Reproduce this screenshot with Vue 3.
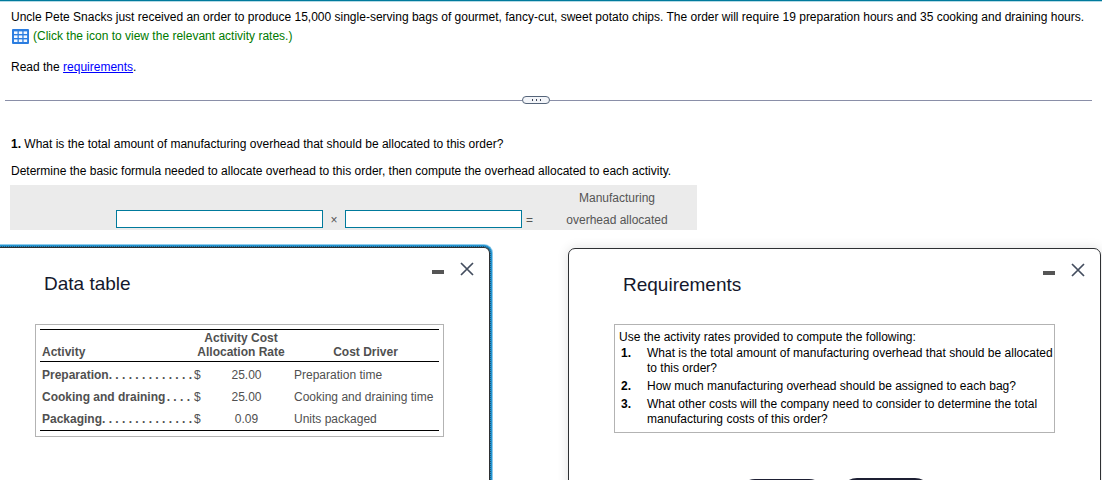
<script setup>
import { ref } from 'vue'

const factorA = ref('')
const factorB = ref('')

const rates = [
  { name: 'Preparation', dots: 13, rate: '25.00', driver: 'Preparation time' },
  { name: 'Cooking and draining', dots: 4, rate: '25.00', driver: 'Cooking and draining time' },
  { name: 'Packaging', dots: 14, rate: '0.09', driver: 'Units packaged' },
]

const leader = (n) => Array(n).fill('.').join(' ')

const requirements = [
  'What is the total amount of manufacturing overhead that should be allocated\nto this order?',
  'How much manufacturing overhead should be assigned to each bag?',
  'What other costs will the company need to consider to determine the total\nmanufacturing costs of this order?',
]
</script>

<template>
  <div class="page">
    <section class="intro">
      <p>Uncle Pete Snacks just received an order to produce 15,000 single-serving bags of gourmet, fancy-cut, sweet potato chips. The order will require 19 preparation hours and 35 cooking and draining hours.</p>
      <p class="rates-line">
        <button class="rates-button" type="button" aria-label="View the relevant activity rates">
          <svg width="17" height="15" viewBox="0 0 17 15" aria-hidden="true">
            <rect width="17" height="15" rx="1" fill="#2b7de0" />
            <g fill="#f4f8ff">
              <rect x="2" y="2.4" width="3.5" height="2.6" /><rect x="6.8" y="2.4" width="3.5" height="2.6" /><rect x="11.6" y="2.4" width="3.5" height="2.6" />
              <rect x="2" y="6.4" width="3.5" height="2.6" /><rect x="6.8" y="6.4" width="3.5" height="2.6" /><rect x="11.6" y="6.4" width="3.5" height="2.6" />
              <rect x="2" y="10.4" width="3.5" height="2.6" /><rect x="6.8" y="10.4" width="3.5" height="2.6" /><rect x="11.6" y="10.4" width="3.5" height="2.6" />
            </g>
          </svg>
        </button>
        <span>(Click the icon to view the relevant activity rates.)</span>
      </p>
      <p class="read">Read the <a href="#requirements">requirements</a>.</p>
    </section>

    <div class="divider">
      <button class="expander" type="button" aria-label="Show more">
        <i></i><i></i><i></i>
      </button>
    </div>

    <section class="question">
      <p><b>1.</b> What is the total amount of manufacturing overhead that should be allocated to this order?</p>
      <p>Determine the basic formula needed to allocate overhead to this order, then compute the overhead allocated to each activity.</p>
      <div class="formula">
        <span class="result-top">Manufacturing</span>
        <input v-model="factorA" class="factor-a" type="text" aria-label="First factor" />
        <span class="times">×</span>
        <input v-model="factorB" class="factor-b" type="text" aria-label="Second factor" />
        <span class="equals">=</span>
        <span class="result-bottom">overhead allocated</span>
      </div>
    </section>

    <div class="panels">
      <section class="panel data-panel">
        <header class="panel-head">
          <h2>Data table</h2>
          <div class="controls">
            <button type="button" class="minimize" aria-label="Minimize"></button>
            <button type="button" class="close" aria-label="Close">
              <svg width="14" height="14" viewBox="0 0 14 14" aria-hidden="true"><path d="M1 1 13 13M13 1 1 13" /></svg>
            </button>
          </div>
        </header>
        <div class="box table-box">
          <table>
            <colgroup>
              <col class="c-activity" /><col class="c-sign" /><col class="c-rate" /><col class="c-driver" />
            </colgroup>
            <thead>
              <tr>
                <th scope="col" class="left">Activity</th>
                <th scope="col" colspan="2">Activity Cost<br />Allocation Rate</th>
                <th scope="col">Cost Driver</th>
              </tr>
            </thead>
            <tbody>
              <tr v-for="row in rates" :key="row.name">
                <th scope="row" class="left">
                  <div class="led"><span>{{ row.name }}</span><span aria-hidden="true">{{ leader(row.dots) }}</span></div>
                </th>
                <td class="sign">$</td>
                <td class="rate">{{ row.rate }}</td>
                <td class="driver">{{ row.driver }}</td>
              </tr>
            </tbody>
          </table>
        </div>
      </section>

      <section id="requirements" class="panel req-panel">
        <header class="panel-head">
          <h2>Requirements</h2>
          <div class="controls">
            <button type="button" class="minimize" aria-label="Minimize"></button>
            <button type="button" class="close" aria-label="Close">
              <svg width="14" height="14" viewBox="0 0 14 14" aria-hidden="true"><path d="M1 1 13 13M13 1 1 13" /></svg>
            </button>
          </div>
        </header>
        <div class="box req-box">
          <p>Use the activity rates provided to compute the following:</p>
          <ol>
            <li v-for="(text, i) in requirements" :key="i"><b>{{ i + 1 }}.</b><span>{{ text }}</span></li>
          </ol>
        </div>
        <footer class="actions">
          <button type="button" class="pill" aria-label="Print"></button>
          <button type="button" class="pill filled" aria-label="Done"></button>
        </footer>
      </section>
    </div>
  </div>
</template>

<style>
body {
  margin: 0;
  background: #fff;
}
</style>

<style scoped>
.page {
  box-sizing: border-box;
  display: flex;
  flex-direction: column;
  height: 100vh;
  overflow: hidden;
  border-top: 1px solid #007a9c;
  box-shadow: inset 0 1px 0 #b5dbe6;
  background: #fff;
  color: #000;
  font-family: "Liberation Sans", Arial, sans-serif;
  font-size: 12px;
  line-height: 16px;
}

p,
h2,
ol {
  margin: 0;
  padding: 0;
}

button {
  padding: 0;
  border: 0;
  background: none;
  cursor: pointer;
}

svg {
  display: block;
}

.intro {
  padding: 8px 11px 0;
}

.rates-line {
  display: flex;
  align-items: center;
  gap: 4px;
  margin-top: 3px;
  padding-left: 1px;
  color: #007a00;
}

.read {
  margin-top: 15px;
}

.read a {
  color: #00f;
}

.divider {
  display: flex;
  align-items: center;
  margin: 21px 10px 0 5px;
}

.divider::before,
.divider::after {
  content: "";
  flex: 1 1 0;
  height: 1px;
  background: #8a8fa8;
}

.divider::before {
  flex-grow: 517;
}

.divider::after {
  flex-grow: 542;
}

.expander {
  box-sizing: border-box;
  display: flex;
  align-items: center;
  justify-content: center;
  gap: 3px;
  width: 28px;
  height: 8px;
  border: 1px solid #56657a;
  border-radius: 4px;
  background: #f3f5f9;
}

.expander i {
  width: 1px;
  height: 2px;
  background: #3c4356;
}

.question {
  padding: 32px 10px 0;
}

.question p {
  padding-left: 1px;
}

.question p + p {
  margin-top: 11px;
}

.formula {
  display: grid;
  grid-template-columns: 106px 207px 22px 177px 15px 160px;
  grid-template-rows: 22px 22px;
  align-items: center;
  justify-content: start;
  justify-items: center;
  width: fit-content;
  margin-top: 6px;
  padding-top: 1px;
  background: #ebebeb;
  color: #555;
  line-height: 18px;
}

.formula span {
  padding-top: 2px;
}

.result-top {
  grid-area: 1 / 6;
}

.factor-a {
  grid-area: 2 / 2;
}

.times {
  grid-area: 2 / 3;
}

.factor-b {
  grid-area: 2 / 4;
}

.equals {
  grid-area: 2 / 5;
}

.result-bottom {
  grid-area: 2 / 6;
}

.formula input {
  box-sizing: border-box;
  width: 100%;
  height: 18px;
  padding: 0 3px;
  border: 1px solid #007a9c;
  border-radius: 0;
  background: #fff;
  font: inherit;
  outline: none;
}

.panels {
  flex: 1 0 auto;
  display: grid;
  grid-template-columns: 490fr 533fr;
  gap: 78px;
  margin-top: 14px;
  padding-right: 1px;
}

.panel {
  box-sizing: border-box;
  min-width: 0;
  border: 1px solid #2e3033;
  background: #fff;
}

.data-panel {
  margin-top: 3px;
  padding: 0 45px 40px 35px;
  border-left: 0;
  border-radius: 0 6px 0 0;
  outline: 1px dotted #24566f;
  box-shadow: 0 0 0 2px #2293d1, 0 0 0 3px #8fcbea;
}

.req-panel {
  margin-top: 4px;
  padding: 0 45px 0;
  border-radius: 7px 7px 0 0;
  box-shadow: 0 0 12px rgba(0, 0, 0, 0.12);
}

.panel-head {
  display: flex;
  justify-content: space-between;
  height: 76px;
  padding-left: 9px;
}

.req-panel .panel-head {
  height: 75px;
}

.panel-head h2 {
  padding-top: 25px;
  color: #14182c;
  font-size: 19px;
  font-weight: 400;
  line-height: 22px;
}

.controls {
  display: flex;
  align-items: center;
  gap: 16px;
  height: 14px;
  margin: 14px -30px 0 0;
}

.minimize {
  width: 12px;
  height: 4px;
  margin-top: 5px;
  background: #555;
}

.close path {
  fill: none;
  stroke: #434d5e;
  stroke-width: 1.7;
}

.box {
  border: 1px solid #b3b3b3;
}

.table-box {
  padding: 4px 4px 5px;
  color: #505050;
}

table {
  width: 100%;
  border-collapse: separate;
  border-spacing: 0;
  table-layout: fixed;
  border-top: 1px solid #000;
  border-bottom: 1px solid #000;
}

.c-activity {
  width: 150px;
}

.c-sign {
  width: 11px;
}

.c-rate {
  width: 91px;
}

th,
td {
  padding: 0;
}

thead th {
  padding: 1px 0 2px;
  border-bottom: 1px solid #000;
  line-height: 14px;
  text-align: center;
  vertical-align: bottom;
}

.left,
thead .left {
  padding-left: 2px;
  text-align: left;
}

tbody th,
tbody td {
  height: 22px;
  line-height: 22px;
}

tbody tr:first-child > * {
  padding-top: 2px;
}

.led {
  display: flex;
  justify-content: space-between;
  white-space: nowrap;
}

.sign {
  padding-left: 4px;
  text-align: left;
}

.rate {
  text-align: center;
}

.driver {
  padding-left: 2px;
  white-space: nowrap;
}

.req-box {
  padding: 5px 0 5px 4px;
  line-height: 15px;
}

ol {
  display: grid;
  gap: 3px;
  margin-top: 1px;
  list-style: none;
}

li {
  display: grid;
  grid-template-columns: 26px 1fr;
  padding-left: 2px;
}

li span {
  white-space: pre-line;
}

.actions {
  display: flex;
  align-items: center;
  justify-content: center;
  gap: 14px;
  margin-top: 45px;
}

.pill {
  box-sizing: border-box;
  width: 88px;
  height: 34px;
  border: 2px solid #1d1f33;
  border-radius: 17px;
}

.filled {
  width: 92px;
  height: 36px;
  background: #1d1f33;
}
</style>
